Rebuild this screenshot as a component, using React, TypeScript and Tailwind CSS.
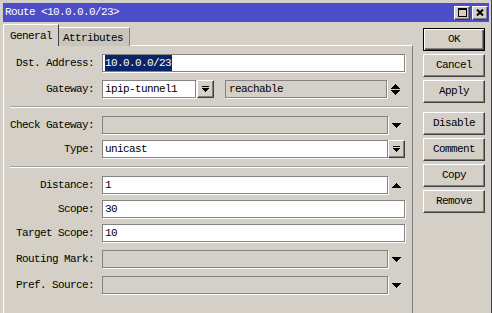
import type {ReactNode} from "react";

const Tri = ({up}: {up?: boolean}) => {
    const rows = up ? [1, 3, 5, 7, 9] : [9, 7, 5, 3, 1];
    return <svg width="9" height="5" shapeRendering="crispEdges">
        {rows.map((w, i) => <rect key={i} x={(9 - w) / 2} y={i} width={w} height="1" fill="#000"/>)}
    </svg>
}

const UpDown = () => <svg width="9" height="11" shapeRendering="crispEdges">
    {[1, 3, 5, 7, 9].map((w, i) => <rect key={"u" + i} x={(9 - w) / 2} y={i} width={w} height="1" fill="#000"/>)}
    {[9, 7, 5, 3, 1].map((w, i) => <rect key={"d" + i} x={(9 - w) / 2} y={i + 6} width={w} height="1" fill="#000"/>)}
</svg>

const DropGlyph = () => <svg width="7" height="7" shapeRendering="crispEdges">
    <rect x="0" y="0" width="7" height="1" fill="#000"/>
    {[7, 5, 3, 1].map((w, i) => <rect key={i} x={(7 - w) / 2} y={i + 2} width={w} height="1" fill="#000"/>)}
</svg>

const raised = "border border-t-white border-l-white border-b-[#404040] border-r-[#404040] shadow-[inset_-1px_-1px_0_#808080] bg-[#d4d0c8]";
const field = "h-[18px] border border-[#848284] shadow-[1px_1px_0_#fff] flex items-center pl-[2px]";

const DropBtn = () => <div className={`w-[17px] h-[18px] flex items-center justify-center ${raised}`}>
    <DropGlyph/>
</div>

const Row = ({label, children, mt}: { label: string, children: ReactNode, mt: string }) =>
    <div className={`flex items-center ${mt}`}>
        <div className="w-[90px] text-right whitespace-nowrap">{label}</div>
        <div className="ml-[8px] flex items-center">{children}</div>
    </div>

const Sep = ({mt}: { mt: string }) => <div className={`ml-[6px] w-[398px] h-[2px] border-t border-t-[#a0a0a0] border-b border-b-white ${mt}`}/>

const Btn = ({label, def, mt}: { label: string, def?: boolean, mt: string }) =>
    <div className={`w-[62px] h-[23px] flex items-center justify-center ${mt} ${def
        ? "border border-black bg-[#d4d0c8] shadow-[inset_1px_1px_0_#fff,inset_-1px_-1px_0_#404040,inset_-2px_-2px_0_#808080]"
        : raised}`}>
        {label}
    </div>

export default function App() {
    return <div
        className="w-[492px] h-[313px] bg-[#d4d0c8] overflow-hidden pt-[3px] pl-[3px] pr-[2px] font-['Liberation_Mono',monospace] text-[11px] tracking-[-0.6px] text-black border-r border-r-[#404040]">
        <div className="h-[19px] bg-[#4b4ec8] flex items-center justify-between pl-[2px] pr-[1px]">
            <span className="text-white">Route &lt;10.0.0.0/23&gt;</span>
            <div className="flex gap-[2px]">
                <div className={`w-[16px] h-[14px] flex items-center justify-center ${raised}`}>
                    <svg width="9" height="9" shapeRendering="crispEdges">
                        <rect x="0.5" y="0.5" width="8" height="8" fill="none" stroke="#000"/>
                        <rect x="0" y="0" width="9" height="2" fill="#000"/>
                    </svg>
                </div>
                <div className={`w-[16px] h-[14px] flex items-center justify-center ${raised}`}>
                    <svg width="8" height="7" viewBox="0 0 8 7">
                        <path d="M1 0.5 L7 6.5 M7 0.5 L1 6.5" stroke="#000" strokeWidth="2"/>
                    </svg>
                </div>
            </div>
        </div>
        <div className="flex h-full">
            <div className="w-[410px] flex flex-col">
                <div className="flex items-end mt-[2px] relative z-10 -mb-px">
                    <div className="w-[56px] h-[22px] bg-[#d4d0c8] border-t border-l border-r border-t-white border-l-white border-r-[#404040] pl-[6px] pt-[3px]">
                        General
                    </div>
                    <div className="w-[71px] h-[19px] bg-[#c9c5bd] border-t border-r border-t-white border-r-[#808080] pl-[4px] pt-[2px]">
                        Attributes
                    </div>
                </div>
                <div className="flex-1 border-t border-l border-r border-t-white border-l-white border-r-[#808080] flex flex-col">
                    <Row label="Dst. Address:" mt="mt-[8px]">
                        <div className={`${field} w-[303px] bg-white`}>
                            <span className="bg-[#0a246a] text-white pr-px">10.0.0.0/23</span>
                        </div>
                    </Row>
                    <Row label="Gateway:" mt="mt-[8px]">
                        <div className={`${field} w-[94px] bg-white`}>ipip-tunnel1</div>
                        <div className="ml-[1px]"><DropBtn/></div>
                        <div className={`${field} w-[162px] ml-[11px] pl-[3px]`}>reachable</div>
                        <div className="w-[17px] flex justify-center"><UpDown/></div>
                    </Row>
                    <Sep mt="mt-[8px]"/>
                    <Row label="Check Gateway:" mt="mt-[8px]">
                        <div className={`${field} w-[286px]`}/>
                        <div className="w-[17px] flex justify-center"><Tri/></div>
                    </Row>
                    <Row label="Type:" mt="mt-[6px]">
                        <div className={`${field} w-[286px] bg-white`}>unicast</div>
                        <DropBtn/>
                    </Row>
                    <Sep mt="mt-[8px]"/>
                    <Row label="Distance:" mt="mt-[8px]">
                        <div className={`${field} w-[286px] bg-white`}>1</div>
                        <div className="w-[17px] flex justify-center"><Tri up/></div>
                    </Row>
                    <Row label="Scope:" mt="mt-[6px]">
                        <div className={`${field} w-[303px] bg-white`}>30</div>
                    </Row>
                    <Row label="Target Scope:" mt="mt-[6px]">
                        <div className={`${field} w-[303px] bg-white`}>10</div>
                    </Row>
                    <Row label="Routing Mark:" mt="mt-[8px]">
                        <div className={`${field} w-[286px]`}/>
                        <div className="w-[17px] flex justify-center"><Tri/></div>
                    </Row>
                    <Row label="Pref. Source:" mt="mt-[8px]">
                        <div className={`${field} w-[286px]`}/>
                        <div className="w-[17px] flex justify-center"><Tri/></div>
                    </Row>
                </div>
            </div>
            <div className="ml-[10px] pt-[6px] flex flex-col">
                <Btn label="OK" def mt="mt-0"/>
                <Btn label="Cancel" mt="mt-[3px]"/>
                <Btn label="Apply" mt="mt-[3px]"/>
                <Btn label="Disable" mt="mt-[9px]"/>
                <Btn label="Comment" mt="mt-[3px]"/>
                <Btn label="Copy" mt="mt-[3px]"/>
                <Btn label="Remove" mt="mt-[3px]"/>
            </div>
        </div>
    </div>
}
